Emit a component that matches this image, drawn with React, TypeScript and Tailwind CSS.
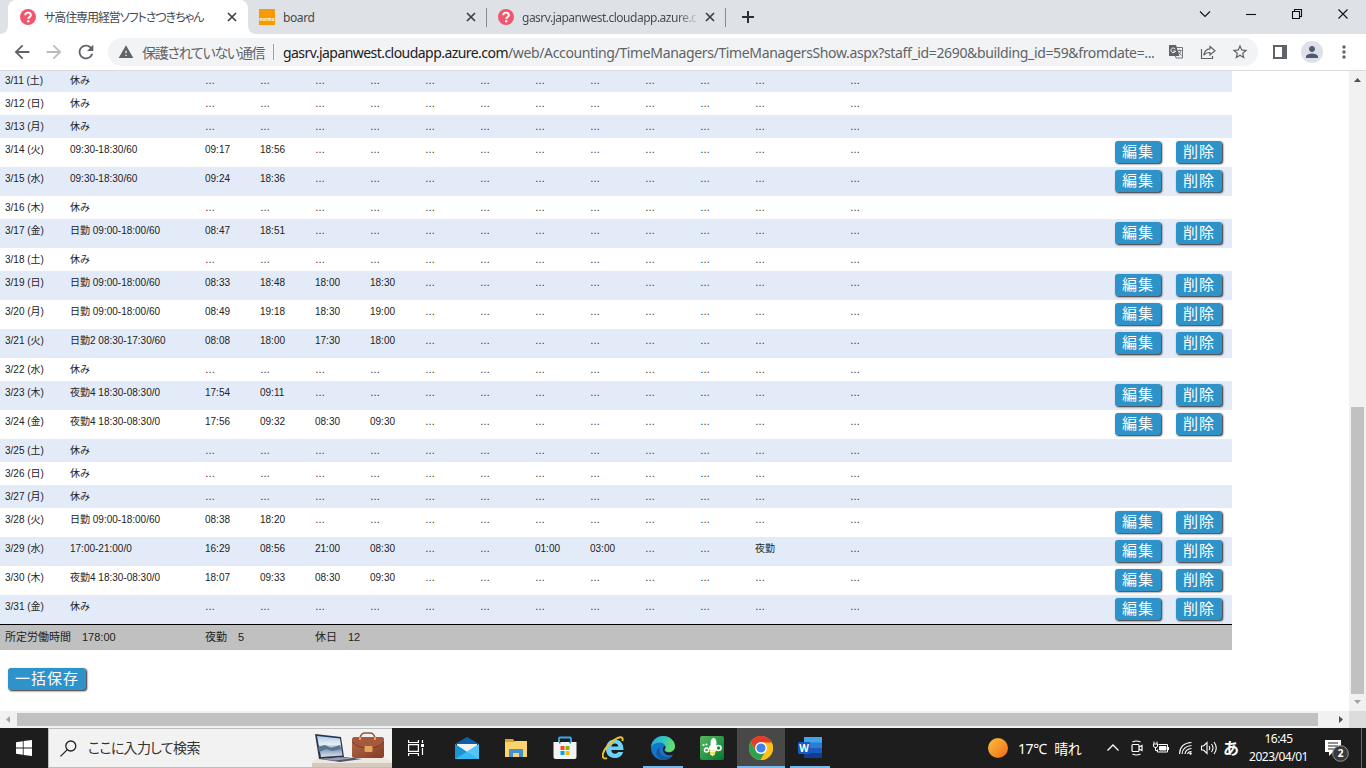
import type { ReactNode } from "react";
import {
  MdArrowBack,
  MdArrowForward,
  MdMoreVert,
  MdPerson,
  MdRefresh,
  MdStarBorder,
  MdWarning,
} from "react-icons/md";

type Row = {
  date: string;
  plan: string;
  // 出勤, 退勤, 以降の時刻
  times?: string[];
  editable?: boolean;
};

const E = "…";

const rows: Row[] = [
  { date: "3/11 (土)", plan: "休み" },
  { date: "3/12 (日)", plan: "休み" },
  { date: "3/13 (月)", plan: "休み" },
  { date: "3/14 (火)", plan: "09:30-18:30/60", times: ["09:17", "18:56"], editable: true },
  { date: "3/15 (水)", plan: "09:30-18:30/60", times: ["09:24", "18:36"], editable: true },
  { date: "3/16 (木)", plan: "休み" },
  { date: "3/17 (金)", plan: "日勤 09:00-18:00/60", times: ["08:47", "18:51"], editable: true },
  { date: "3/18 (土)", plan: "休み" },
  { date: "3/19 (日)", plan: "日勤 09:00-18:00/60", times: ["08:33", "18:48", "18:00", "18:30"], editable: true },
  { date: "3/20 (月)", plan: "日勤 09:00-18:00/60", times: ["08:49", "19:18", "18:30", "19:00"], editable: true },
  { date: "3/21 (火)", plan: "日勤2 08:30-17:30/60", times: ["08:08", "18:00", "17:30", "18:00"], editable: true },
  { date: "3/22 (水)", plan: "休み" },
  { date: "3/23 (木)", plan: "夜勤4 18:30-08:30/0", times: ["17:54", "09:11"], editable: true },
  { date: "3/24 (金)", plan: "夜勤4 18:30-08:30/0", times: ["17:56", "09:32", "08:30", "09:30"], editable: true },
  { date: "3/25 (土)", plan: "休み" },
  { date: "3/26 (日)", plan: "休み" },
  { date: "3/27 (月)", plan: "休み" },
  { date: "3/28 (火)", plan: "日勤 09:00-18:00/60", times: ["08:38", "18:20"], editable: true },
  {
    date: "3/29 (水)",
    plan: "17:00-21:00/0",
    times: ["16:29", "08:56", "21:00", "08:30", E, E, "01:00", "03:00", E, E, "夜勤"],
    editable: true,
  },
  { date: "3/30 (木)", plan: "夜勤4 18:30-08:30/0", times: ["18:07", "09:33", "08:30", "09:30"], editable: true },
  { date: "3/31 (金)", plan: "休み", editable: true },
];

const COLS = 12;

function ActionButton({ children }: { children: ReactNode }) {
  return (
    <button className="h-[22px] shrink-0 whitespace-nowrap rounded-[3px] bg-[#2e93c9] pl-[7px] pr-[7px] text-[15px] leading-[22px] tracking-[1px] text-white shadow-[1px_1px_2px_#222]">
      {children}
    </button>
  );
}

function TimeRow({ row, striped, first }: { row: Row; striped: boolean; first: boolean }) {
  const height = row.editable ? "h-[29px]" : first ? "h-[21px]" : "h-[23px]";
  return (
    <div
      className={`grid shrink-0 grid-cols-[65px_135px_repeat(10,55px)_95px_265px_auto] pl-[5px] text-[10px] leading-[12px] ${height} ${
        striped ? "bg-[#e4ebf8]" : "bg-white"
      }`}
    >
      <div className={first ? "pt-[4px]" : "pt-[6px]"}>{row.date}</div>
      <div className={first ? "pt-[4px]" : "pt-[6px]"}>{row.plan}</div>
      {Array.from({ length: COLS }, (_, i) => (
        <div key={i} className={first ? "pt-[4px]" : "pt-[6px]"}>
          {row.times?.[i] ?? E}
        </div>
      ))}
      {row.editable && (
        <div className="flex gap-[15px] pt-[3px]">
          <ActionButton>編集</ActionButton>
          <ActionButton>削除</ActionButton>
        </div>
      )}
    </div>
  );
}

function HelpFavicon() {
  return (
    <svg viewBox="0 0 16 16" className="size-4 shrink-0">
      <circle cx="8" cy="8" r="8" fill="#f2556e" />
      <path d="M5.2 6.3C5.2 4.5 6.4 3.6 8 3.6s2.9 1 2.9 2.5c0 2-2.6 2-2.6 3.8" fill="none" stroke="#fff" strokeWidth="1.9" />
      <circle cx="8.2" cy="12.3" r="1.2" fill="#fff" />
    </svg>
  );
}

function TabClose() {
  return (
    <svg viewBox="0 0 10 10" className="size-[10px] shrink-0" stroke="#3c4043" strokeWidth="1.7">
      <path d="M1 1l8 8M9 1l-8 8" />
    </svg>
  );
}

function TabStrip() {
  return (
    <div className="flex h-[34px] shrink-0 bg-[#dee1e6] text-[12px] text-[#45494d]">
      <div className="flex w-2 items-end bg-white">
        <div className="h-full w-2 rounded-br-lg bg-[#dee1e6]" />
      </div>
      <div className="flex w-60 items-center rounded-t-lg bg-white pl-3">
        <HelpFavicon />
        <div className="ml-2 w-[183px] whitespace-nowrap pt-px tracking-[-1.08px] [font-feature-settings:'palt']">
          サ高住専用経営ソフトさつきちゃん
        </div>
        <TabClose />
      </div>
      <div className="w-2 bg-white">
        <div className="h-full w-2 rounded-bl-lg bg-[#dee1e6]" />
      </div>
      <div className="flex w-[230px] items-center pl-[3px]">
        <div className="flex size-4 items-end justify-center bg-[#f59a00] pb-[4px] text-[4.5px] font-bold leading-none text-white">
          norma
        </div>
        <div className="ml-2 w-[183px] pt-px tracking-[-0.4px]">board</div>
        <TabClose />
      </div>
      <div className="mt-2 h-[19px] w-px bg-[#85888c]" />
      <div className="flex w-[238px] items-center pl-[11px]">
        <HelpFavicon />
        <div className="ml-2 w-[183px] whitespace-nowrap bg-[linear-gradient(to_right,#45494d_155px,#d0d3d7_176px)] bg-clip-text pt-px tracking-[-0.5px] text-transparent">
          gasrv.japanwest.cloudapp.azure.c
        </div>
        <TabClose />
      </div>
      <div className="mt-2 h-[19px] w-px bg-[#85888c]" />
      <svg viewBox="0 0 12 12" className="ml-4 mt-[11px] size-3" stroke="#2d3033" strokeWidth="2">
        <path d="M6 0v12M0 6h12" />
      </svg>
      <div className="ml-auto flex h-7 text-black">
        <WindowButton>
          <path d="M13 11.5l5 5 5-5" />
        </WindowButton>
        <WindowButton>
          <path d="M13 14.5h10" />
        </WindowButton>
        <WindowButton>
          <path d="M13.5 11.5h7v7h-7zM15.500 11.500v-2h7v7h-2" />
        </WindowButton>
        <WindowButton>
          <path d="M13.5 9.5l9 9M22.5 9.5l-9 9" />
        </WindowButton>
      </div>
    </div>
  );
}

function WindowButton({ children }: { children: ReactNode }) {
  return (
    <div className="flex w-[46px] justify-center">
      <svg viewBox="0 0 36 28" className="h-7 w-9" fill="none" stroke="#111" strokeWidth="1.1">
        {children}
      </svg>
    </div>
  );
}

function Toolbar() {
  return (
    <div className="flex h-9 shrink-0 items-center bg-white pl-[11px] text-[#5f6368]">
      <MdArrowBack className="size-[22px]" />
      <MdArrowForward className="ml-[10px] size-[22px] text-[#b9bbbe]" />
      <MdRefresh className="ml-[10px] size-[22px]" />
      <div className="ml-[11px] flex h-7 w-[1150px] items-center rounded-full bg-[#f1f3f4] pl-[10px] text-[14px]">
        <MdWarning className="size-4 shrink-0" />
        <span className="ml-2 w-[122px] shrink-0 whitespace-nowrap tracking-[-1.3px] [font-feature-settings:'palt']">
          保護されていない通信
        </span>
        <span className="ml-[9px] h-4 w-px shrink-0 bg-[#9aa0a6]" />
        <span className="ml-[9px] w-[876px] shrink-0 whitespace-nowrap tracking-[-0.36px]">
          <span className="tracking-[-0.55px] text-[#202124]">gasrv.japanwest.cloudapp.azure.com</span>
          /web/Accounting/TimeManagers/TimeManagersShow.aspx?staff_id=2690&amp;building_id=59&amp;fromdate=...
        </span>
        <svg viewBox="0 0 16 16" className="ml-[9px] size-4 shrink-0">
          <path d="M5 3.5h9.5v10.500H8z" fill="none" stroke="#73777b" />
          <path d="M1 1h7l3.500 11H1z" fill="#5f6368" />
          <path d="M7.300 5.200A2.300 2.300 0 1 0 7.500 7H5.300" fill="none" stroke="#fff" />
          <path d="M9.500 6.500h4M11.500 5.500v1M13 6.500c-.5 2-1.500 3-2.500 4M10.500 8l3 3.500" fill="none" stroke="#73777b" />
        </svg>
        <svg viewBox="0 0 16 16" className="ml-4 size-4 shrink-0" fill="none" stroke="#5f6368" strokeWidth="1.2">
          <path d="M1.500 5v9.500h11V12" />
          <path d="M10 2.500l5 4.200-5 4.200V8.500c-3 0-5 .8-6.300 2.700C4.200 7.500 6.200 5.100 10 4.800z" />
        </svg>
        <MdStarBorder className="ml-[15px] size-[18px] shrink-0" />
      </div>
      <div className="ml-[15px] h-[14px] w-[14px] border-2 border-r-[5px] border-[#5f6368]" />
      <div className="ml-[14px] flex size-[22px] items-center justify-center rounded-full bg-[#dde0e6]">
        <MdPerson className="size-[18px] text-[#4e5a70]" />
      </div>
      <MdMoreVert className="ml-[11px] size-5" />
    </div>
  );
}

function PageContent() {
  return (
    <div className="flex w-[1349px] flex-col overflow-hidden bg-white font-['Liberation_Sans','Noto_Sans_CJK_JP',sans-serif] text-[#222]">
      <div className="flex w-[1232px] flex-col">
        {rows.map((row, i) => (
          <TimeRow key={row.date} row={row} striped={i % 2 === 0} first={i === 0} />
        ))}
        <div className="grid h-[26px] grid-cols-[200px_110px_auto] border-t border-black bg-[#c0c0c0] pl-[5px] text-[11px] leading-[24px]">
          <div>所定労働時間　178:00</div>
          <div>夜勤　5</div>
          <div>休日　12</div>
        </div>
      </div>
      <div className="flex pl-2 pt-[18px]">
        <ActionButton>一括保存</ActionButton>
      </div>
    </div>
  );
}

function VerticalScrollbar() {
  return (
    <div className="flex w-[17px] flex-col items-center bg-[#f1f1f1]">
      <svg viewBox="0 0 17 17" className="h-[17px] w-[17px]">
        <path d="M5 11h7L8.500 7z" fill="#505050" />
      </svg>
      <div className="mt-[319px] h-[287px] w-[13px] bg-[#c1c1c1]" />
      <svg viewBox="0 0 17 17" className="h-[17px] w-[17px]">
        <path d="M5 6h7L8.500 10z" fill="#a3a3a3" />
      </svg>
    </div>
  );
}

function HorizontalScrollbar() {
  return (
    <div className="flex h-[17px] shrink-0 items-center bg-[#f1f1f1]">
      <svg viewBox="0 0 17 17" className="h-[17px] w-[17px]">
        <path d="M10 5v7L6 8.500z" fill="#a3a3a3" />
      </svg>
      <div className="h-[13px] w-[1301px] bg-[#c1c1c1]" />
      <svg viewBox="0 0 17 17" className="ml-[14px] h-[17px] w-[17px]">
        <path d="M7 5v7l4-3.500z" fill="#505050" />
      </svg>
      <div className="h-full w-[17px] bg-[#dcdcdc]" />
    </div>
  );
}

function SearchArt() {
  return (
    <svg viewBox="0 0 80 38" className="h-[38px] w-20 shrink-0">
      <defs>
        <linearGradient id="bag" x1="0" y1="0" x2="1" y2="1">
          <stop offset="0" stopColor="#b8694a" />
          <stop offset="1" stopColor="#823d26" />
        </linearGradient>
        <linearGradient id="screen" x1="0" y1="0" x2="0" y2="1">
          <stop offset="0" stopColor="#a7d0ee" />
          <stop offset="0.4" stopColor="#e8eef2" />
          <stop offset="0.6" stopColor="#7896b4" />
          <stop offset="1" stopColor="#d9e4ee" />
        </linearGradient>
      </defs>
      <path d="M5 29h70l5 5H0z" fill="#eee7e0" />
      <path d="M0 34h80v4H0z" fill="#d6cabf" />
      <path d="M3 5l26 3 3 20-25 2z" fill="#2c3449" />
      <path d="M5 7l23 2.500 2.500 17L9 28z" fill="url(#screen)" />
      <path d="M6 18l7-2 6 3 9-3 1 4-9 2-6-2-7 3z" fill="#5a7390" />
      <path d="M7 30l25-2 18 2-22 3z" fill="#4d5468" />
      <path d="M10 30l21-1.500 9 1-17 2z" fill="#9ba3b4" />
      <path d="M48 9q1-5 5-5h5q4 0 5 5" fill="none" stroke="#9b5239" strokeWidth="1.600" />
      <rect x="40" y="8" width="32" height="21" rx="2.500" fill="url(#bag)" />
      <path d="M40 13q0-5 3-5h26q3 0 3 5-6 6-16 6t-16-6z" fill="#a55a3d" />
      <path d="M40 13q6 6 16 6t16-6" fill="none" stroke="#6d3322" strokeWidth="0.800" />
      <rect x="52.500" y="17" width="8" height="6" rx="1" fill="#e2a45b" />
      <path d="M47 8h2v3h-2zM62 8h2v3h-2z" fill="#e2a45b" />
    </svg>
  );
}

function TaskIcon({ children, active, open }: { children: ReactNode; active?: boolean; open?: boolean }) {
  return (
    <div className={`flex w-12 flex-col items-center ${active ? "bg-[#484848]" : ""}`}>
      <svg viewBox="0 0 24 24" className="mb-[6px] mt-2 size-6 shrink-0">
        {children}
      </svg>
      {(open || active) && <div className={`h-0.5 bg-[#76b9ed] ${active ? "w-12" : "w-10"}`} />}
    </div>
  );
}

function TaskApps() {
  return (
    <div className="ml-[3px] flex gap-px">
      <TaskIcon>
        <path d="M0 8L12 1l12 7z" fill="#0f5fa8" />
        <path d="M2 8h20v8H2z" fill="#f2f2f2" />
        <path d="M0 8l12 8L24 8v15H0z" fill="#2cb1ec" />
        <path d="M24 8L0 23h24z" fill="#53c6f6" />
        <path d="M0 8l12 8L0 23z" fill="#1795d4" />
        <path d="M12 16L0 23h24z" fill="#38b8f0" />
      </TaskIcon>
      <TaskIcon>
        <path d="M1 3h8l2 3v5H1z" fill="#e5a020" />
        <path d="M1 6h9l1-1h12v16H1z" fill="#fbd36b" />
        <path d="M5 21v-8h14v8h-4v-4H9v4z" fill="#4290d2" />
        <path d="M9 17h6v4H9z" fill="#fbd36b" />
      </TaskIcon>
      <TaskIcon>
        <path d="M6 7V2.500q0-1 1-1h10q1 0 1 1V7" fill="none" stroke="#32b1e9" strokeWidth="1.800" />
        <path d="M.5 6h23v15q0 2-2 2h-19q-2 0-2-2z" fill="#f3f3f3" />
        <path d="M6 6h1.500v1.500H6zM16.500 6H18v1.500h-1.500z" fill="#1b7fb8" />
        <path d="M7.500 10h4v4h-4z" fill="#f25022" />
        <path d="M12.500 10h4v4h-4z" fill="#7fba00" />
        <path d="M7.500 15h4v4h-4z" fill="#00a4ef" />
        <path d="M12.500 15h4v4h-4z" fill="#ffb900" />
      </TaskIcon>
      <TaskIcon>
        <path
          d="M21.500 14H9.300c.2 2.300 1.500 3.700 3.600 3.700 1.500 0 2.600-.5 3.200-1.700h5c-1.200 4-4.200 6-8.400 6-5.400 0-8.700-3.500-8.700-9S7.300 3.500 12.500 3.500c5.700 0 9 4 9 10.500zM9.400 10.500h6.900c-.2-2-1.500-3.100-3.400-3.100s-3.200 1.100-3.500 3.100z"
          fill="#6bd3f7"
        />
        <path d="M5 22.200C-1.500 24-.5 16 7 8.500S22-1.500 20.500 5" fill="none" stroke="#f3c02f" strokeWidth="1.900" />
      </TaskIcon>
      <TaskIcon open>
        <defs>
          <linearGradient id="edge" x1="0" y1="0" x2="1" y2="0.300">
            <stop offset="0" stopColor="#29a9df" />
            <stop offset="0.500" stopColor="#31c3c7" />
            <stop offset="1" stopColor="#68dc68" />
          </linearGradient>
        </defs>
        <circle cx="12" cy="12" r="12" fill="#1177cb" />
        <path d="M0 11C1 4 6 0 12 0c7 0 12 5 12 10 0 4-3 6-6 6-3 0-5-1-4-3 1-1 1-2 0-4-3-4-11-3-14 2z" fill="url(#edge)" />
        <path d="M9 11c-2 5 1 9 6 10 3 .5 5-.5 7-2-3 6-11 6-15 2-3-3-2-8 2-10z" fill="#15579f" />
        <path d="M14 10c1 1.500 0 2.500-.5 3.500-.5 2 2 3 4.500 3 2.500 0 5-1.500 6.500-5V18l-2 .5c-4 2-11 .5-10.500-5.500 0-1 .5-2.500 2-3z" fill="#1d1d1d" />
      </TaskIcon>
      <TaskIcon>
        <defs>
          <linearGradient id="green" x1="0" y1="0" x2="1" y2="1">
            <stop offset="0" stopColor="#57b862" />
            <stop offset="1" stopColor="#06792d" />
          </linearGradient>
        </defs>
        <rect width="24" height="24" rx="2" fill="url(#green)" />
        <ellipse cx="13.500" cy="7" rx="3" ry="5" fill="#fff" />
        <ellipse cx="13" cy="12" rx="4" ry="3.500" fill="#fff" />
        <circle cx="6.500" cy="14" r="2" fill="none" stroke="#fff" strokeWidth="1.500" />
        <circle cx="3.500" cy="9" r="1.100" fill="#fff" />
        <circle cx="6.500" cy="8.500" r="1.100" fill="#fff" />
        <circle cx="18.500" cy="12" r="2.500" fill="none" stroke="#fff" strokeWidth="1.600" />
        <path d="M10 14.500h5.500l-.5 3.500-2.500 2.500-2.500-2.500z" fill="#f6e04b" />
        <path d="M9.500 15.500h6M10.500 18.500h4" stroke="#fff" strokeWidth="0.800" />
      </TaskIcon>
      <TaskIcon active>
        <circle cx="12" cy="12" r="12" fill="#fbc116" />
        <path d="M1.600 6A12 12 0 0 0 11.500 24L17 15l-5-3-5 3z" fill="#2ba24c" />
        <path d="M12 6.500h10.700A12 12 0 0 1 11.500 24L17 14.500z" fill="#fbc116" />
        <path d="M1.600 6A12 12 0 0 1 22.700 6.500H12L7 14.800z" fill="#e33b2e" />
        <circle cx="12" cy="12" r="6" fill="#fff" />
        <circle cx="12" cy="12" r="4.600" fill="#4081ee" />
      </TaskIcon>
      <TaskIcon open>
        <path d="M6 1h18v6H6z" fill="#41a5ee" />
        <path d="M6 6.500h18V12H6z" fill="#2b7cd3" />
        <path d="M6 12h18v5.500H6z" fill="#185abd" />
        <path d="M6 17h18v5H6z" fill="#103f91" />
        <rect y="6" width="12" height="12" rx="1" fill="#185abd" />
        <text x="6" y="15.500" fontSize="10" fontWeight="bold" textAnchor="middle" fill="#fff">
          W
        </text>
      </TaskIcon>
    </div>
  );
}

function Tray() {
  return (
    <div className="ml-auto flex items-center text-white">
      <div className="size-5 rounded-full bg-gradient-to-br from-[#f8c03c] to-[#ee6a12]" />
      <div className="ml-[10px] w-[87px] whitespace-nowrap text-[14px] tracking-[-0.4px]">
        17℃&nbsp; <span className="ml-px">晴れ</span>
      </div>
      <svg viewBox="0 0 16 16" className="size-4" fill="none" stroke="#fff" strokeWidth="1.300">
        <path d="M2.500 10.500L8 5l5.500 5.500" />
      </svg>
      <svg viewBox="0 0 16 16" className="ml-2 size-4" fill="none" stroke="#fff" strokeWidth="1.200">
        <rect x="3" y="4.500" width="7" height="7" rx="1" />
        <path d="M10 7l3-1.500v5L10 9M3.500 2q4-2 8 0M3.500 14q4 2 8 0" />
      </svg>
      <svg viewBox="0 0 16 16" className="ml-2 size-4" fill="none" stroke="#fff">
        <path d="M5.500 4.500H14.500V12H4.500V9.500M15.500 7v3M1 1.500V4M4 1.500V4M.5 4h4v2q0 1.500-2 1.500T.5 6zM2.500 7.500v3h2" />
        <path d="M6.500 6.500h6.500v3.500H6.500z" fill="#fff" />
      </svg>
      <svg viewBox="0 0 16 16" className="ml-[9px] size-4" fill="none" stroke="#fff" strokeWidth="1.100">
        <path d="M1.500 14Q2 3 13.500 2.500M4 14q.5-7.500 9.500-8.500M7 14q.5-5 6.500-5.500M9.500 14q.5-2.500 4-2.500" />
        <circle cx="12.500" cy="13.500" r="1.200" fill="#fff" stroke="none" />
      </svg>
      <svg viewBox="0 0 18 16" className="ml-[6px] h-4 w-[18px]" fill="none" stroke="#fff" strokeWidth="1.100">
        <path d="M1.500 6h2L7 2.500v11L3.500 10h-2zM9 6q1.500 2 0 4M11.500 4q3 4 0 8M14 2q4.500 6 0 12" />
      </svg>
      <div className="ml-[5px] w-4 text-[16px] font-bold leading-4">あ</div>
      <div className="ml-[9px] w-[61px] text-center text-[12px] leading-[18px] tracking-[-0.5px]">
        <div>16:45</div>
        <div>2023/04/01</div>
      </div>
      <svg viewBox="0 0 26 27" className="ml-[15px] mt-px h-[27px] w-[26px]">
        <path d="M1 5h16v12H9l-4 4v-4H1z" fill="#fff" />
        <path d="M4 8h10M4 11h10M4 14h7" stroke="#222" strokeWidth="1.100" />
        <circle cx="16.500" cy="18.500" r="7.800" fill="#3a3a3a" stroke="#989898" />
        <text x="16.500" y="22" fontSize="10" fontWeight="bold" textAnchor="middle" fill="#fff">
          2
        </text>
      </svg>
      <div className="ml-[11px] mr-1 h-10 w-px bg-[#676767]" />
    </div>
  );
}

function Taskbar() {
  return (
    <div className="flex h-10 shrink-0 bg-[#1d1d1d]">
      <div className="flex w-12 items-center justify-center">
        <svg viewBox="0 0 16 16" className="size-4" fill="#fff">
          <path d="M0 2.200l6.800-1v6.300H0zM7.600 1.100L16 0v7.500H7.600zM0 8.400h6.800v6.400L0 13.800zM7.600 8.400H16V16l-8.400-1.100z" />
        </svg>
      </div>
      <div className="flex w-[344px] items-center border border-r-0 border-[#bdbdbd] bg-[#f2f2f2] pl-[11px]">
        <svg viewBox="0 0 17 17" className="size-[17px]" fill="none" stroke="#222" strokeWidth="1.300">
          <circle cx="10.800" cy="6" r="5" />
          <path d="M7.300 9.600L.5 16.400" />
        </svg>
        <div className="mb-px ml-[11px] w-[224px] whitespace-nowrap text-[14px] tracking-[-0.7px] text-[#333] [font-feature-settings:'palt']">
          ここに入力して検索
        </div>
        <SearchArt />
      </div>
      <div className="flex w-12 items-center justify-center">
        <svg viewBox="0 0 16 16" className="size-4" fill="none" stroke="#fff" strokeWidth="1.200">
          <path d="M.6 0v2.500h9.800V0M.6 16v-2.500h9.800V16M.6 4.600h9.800v6.800H.6zM14.500 0v3M14.500 8v7" />
          <path d="M13 4h3v3h-3z" fill="#fff" stroke="none" />
        </svg>
      </div>
      <TaskApps />
      <Tray />
    </div>
  );
}

export default function App() {
  return (
    <div className="flex h-[768px] w-[1366px] flex-col overflow-hidden bg-white font-['Noto_Sans','Noto_Sans_CJK_JP',sans-serif]">
      <TabStrip />
      <Toolbar />
      <div className="flex h-[641px] shrink-0 border-t border-[#dadce0]">
        <PageContent />
        <VerticalScrollbar />
      </div>
      <HorizontalScrollbar />
      <Taskbar />
    </div>
  );
}
